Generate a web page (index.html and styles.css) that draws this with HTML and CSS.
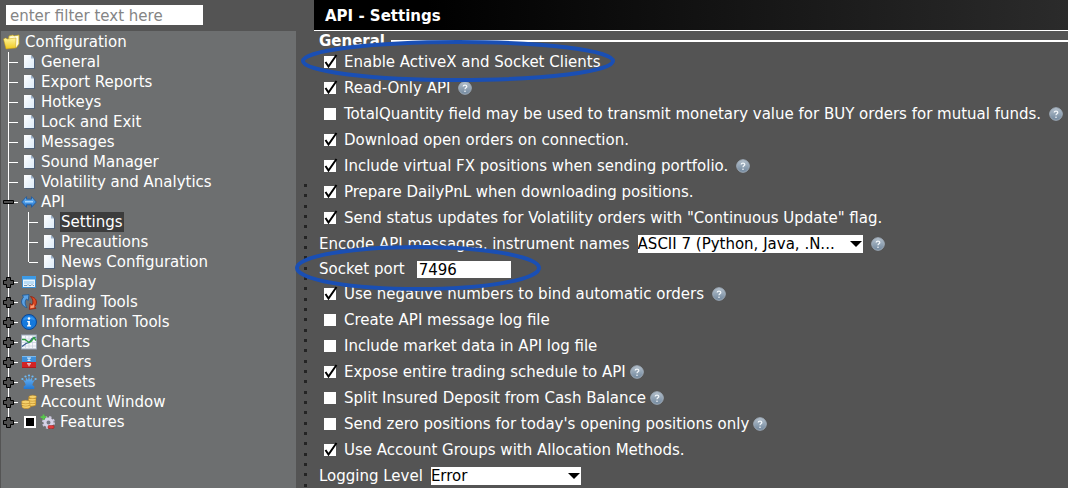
FILE: index.html
```
<!DOCTYPE html>
<html lang="en">

<head>
    <meta charset="utf-8">
    <meta name="viewport" content="width=device-width, initial-scale=1">
    <title>API - Settings</title>
    <link rel="stylesheet" href="styles.css">
</head>

<body>
    <!-- shared icons -->
    <svg class="sprite" aria-hidden="true">
        <defs>
            <linearGradient id="g-page" x1="0" y1="0" x2="1" y2="1">
                <stop offset="0" stop-color="#ffffff"/>
                <stop offset="1" stop-color="#dcebf8"/>
            </linearGradient>
            <linearGradient id="g-folder" x1="0" y1="0" x2="0" y2="1">
                <stop offset="0" stop-color="#fff59a"/>
                <stop offset="1" stop-color="#efc81e"/>
            </linearGradient>
            <linearGradient id="g-blue" x1="0" y1="0" x2="0" y2="1">
                <stop offset="0" stop-color="#6fb8f6"/>
                <stop offset="1" stop-color="#2277d2"/>
            </linearGradient>
            <linearGradient id="g-help" x1="0" y1="0" x2="0" y2="1">
                <stop offset="0" stop-color="#b4c0cc"/>
                <stop offset="1" stop-color="#71879d"/>
            </linearGradient>
        </defs>
        <symbol id="page" viewBox="0 0 11 14">
            <path d="M1 1h7l3 3v10H1z" fill="#50627a"/>
            <path d="M0 0h7l3 3.500V13H0z" fill="url(#g-page)"/>
            <path d="M7 0v3.500h3z" fill="#9db3cb"/>
        </symbol>
        <symbol id="folder" viewBox="0 0 17 16">
            <path d="M6 2l4-1 1 1 5-1v9l-3 4-8-3z" fill="#fff7b0" stroke="#c9a81c" stroke-width=".7"/>
            <path d="M7 3.500l8-1.500v8l-2 3z" fill="#fffbe0"/>
            <path d="M.5 5l2-1 2 1 8.500-1-.5 10-9.500 1z" fill="url(#g-folder)" stroke="#c79c10" stroke-width=".5"/>
        </symbol>
        <symbol id="arrows" viewBox="0 0 16 12">
            <path d="M.7 6L5.500.7v2.500h5V.7L15.300 6l-4.800 5.300V8.800h-5v2.500z" fill="url(#g-blue)" stroke="#1a559c" stroke-width=".8"/>
            <path d="M4 5h8v1.500H4z" fill="#a5d3fa"/>
        </symbol>
        <symbol id="display" viewBox="0 0 16 16">
            <rect x="1.500" y="2.500" width="13" height="11" fill="#eaf5fe" stroke="#3b8ed2"/>
            <path d="M1 2h14v3.500H1z" fill="#3c9ae6"/>
            <path d="M3 7h10v3H3z" fill="#b9dcf6"/>
            <path d="M3 11.500h3l1-1 1 1h2l1-1 1 1h1" fill="none" stroke="#6a8ca8" stroke-width=".9"/>
        </symbol>
        <symbol id="trading" viewBox="0 0 16 16">
            <path d="M6 13.500C2.500 13 .2 10 .6 7c.2-1.500.8-2.700 1.800-3.700L1.500 1.200 8 .6 7.300 6.500 5.500 5C3.500 7.500 3.700 10.500 6 13.500z" fill="#5ba2e4" stroke="#1c5490" stroke-width=".8"/>
            <path d="M9.500 2.500C13.500 3 16 5.800 15.400 9.300c-.2 1.300-.9 2.500-1.800 3.400l1.300 1.700-6.600 1 .8-6 1.700 1.700C12.600 8.600 12.300 5.500 9.500 2.500z" fill="#d94a24" stroke="#8e200d" stroke-width=".8"/>
            <path d="M9.700 10.800l1.200 1.200 2-2 .5 3-.9.7-3.200.6z" fill="#ff9c70"/>
        </symbol>
        <symbol id="info" viewBox="0 0 16 16">
            <circle cx="8" cy="8" r="7.500" fill="#1579dc" stroke="#0b4796"/>
            <path d="M2 6.500C3 1 13 1 14 6.500 10 4.800 6 4.800 2 6.500z" fill="#3494ee"/>
            <circle cx="8" cy="4.500" r="1.200" fill="#fff"/>
            <path d="M6.200 7h2.700v4.300h1.200v1.200H6v-1.200h1.200V8.200h-1z" fill="#fff"/>
        </symbol>
        <symbol id="charts" viewBox="0 0 16 16">
            <rect x=".5" y="1" width="15" height="14" fill="#f6f8fc" stroke="#9aa6b8"/>
            <path d="M1 5h14M1 8.500h14M1 12h14M4.500 2v12M8 2v12M11.500 2v12" stroke="#c5d0e0" stroke-width=".7"/>
            <path d="M1 12.500l4-3 3-1 3-4 4-1.500" fill="none" stroke="#35598f" stroke-width="1.200"/>
            <path d="M1 5.500h3l4 3 2-1 3-4 2 3" fill="none" stroke="#2f9e42" stroke-width="1.400"/>
        </symbol>
        <symbol id="orders" viewBox="0 0 16 16">
            <path d="M1 2h14v6H1z" fill="#3f8fd8"/>
            <path d="M1 8h14v6H1z" fill="#d32424"/>
            <path d="M1 2h14v1H1z" fill="#78b8ee"/>
            <path d="M1 13.500h14v.5H1z" fill="#8b1212"/>
            <path d="M6 4h4M8 4v2.500M6.500 6.500h3M6 9.800h4M8 9.800v2.500" fill="none" stroke="#e8f1fa" stroke-width="1"/>
        </symbol>
        <symbol id="presets" viewBox="0 0 16 16">
            <path d="M2 5.500l2.500 1.500L5 3.500l2 2.500 1-3.500L9 6l2-2.500.5 3.500L14 5.500 12 9l-.7 2 2 1.500V15H2.700v-2.500l2-1.500L4 9z" fill="url(#g-blue)"/>
            <g fill="#6dbbf8">
                <circle cx="1.400" cy="5" r="1.100"/>
                <circle cx="4.500" cy="2.500" r="1.100"/>
                <circle cx="8" cy="1.500" r="1.100"/>
                <circle cx="11.500" cy="2.500" r="1.100"/>
                <circle cx="14.600" cy="5" r="1.100"/>
            </g>
        </symbol>
        <symbol id="coins" viewBox="0 0 17 16">
            <path d="M8 2.500v9c1 2 7 1.500 8-.5V2z" fill="#d59b28"/>
            <path d="M1 8v5c1 2.500 8 2.500 9 .5V8.500z" fill="#d09428"/>
            <g fill="#f5d06a" stroke="#b07a1a" stroke-width=".5">
                <ellipse cx="11.500" cy="10.500" rx="4" ry="1.700"/>
                <ellipse cx="12" cy="8" rx="4" ry="1.700"/>
                <ellipse cx="12" cy="5.500" rx="4" ry="1.700"/>
                <ellipse cx="12.500" cy="2.500" rx="4" ry="1.800"/>
                <ellipse cx="5.500" cy="13" rx="4.500" ry="1.900"/>
                <ellipse cx="5" cy="10.500" rx="4.500" ry="1.900"/>
                <ellipse cx="5" cy="8" rx="4.500" ry="1.900"/>
            </g>
        </symbol>
        <symbol id="features" viewBox="0 0 16 16">
            <circle cx="8.500" cy="8.500" r="5.500" fill="none" stroke="#c9c5dc" stroke-width="2" stroke-dasharray="2.300 2.020"/>
            <circle cx="8.500" cy="8.500" r="3.500" fill="#777a86" stroke="#d5d2e6" stroke-width="3"/>
            <path d="M3.500.5v5.500M.7 3.200h5.600" stroke="#57c94b" stroke-width="1.800"/>
            <rect x="8" y="11.500" width="6" height="3" rx="1" fill="#e23b3b" stroke="#9c1b1b" stroke-width=".5"/>
        </symbol>
        <symbol id="help" viewBox="0 0 14 14">
            <circle cx="7" cy="7" r="6.300" fill="url(#g-help)" stroke="#9eabb8"/>
            <path d="M5.200 5.500C5.200 3.600 8.800 3.600 8.800 5.500 8.800 6.800 7 6.800 7 8.300" fill="none" stroke="#f2f6fa" stroke-width="1.300"/>
            <circle cx="7" cy="10.200" r=".8" fill="#f2f6fa"/>
        </symbol>
        <symbol id="plus" viewBox="0 0 11 11">
            <path d="M3.500.5h4v3h3v4h-3v3h-4v-3h-3v-4h3z" fill="#4c4c4c" stroke="#000"/>
        </symbol>
        <symbol id="minus" viewBox="0 0 11 11">
            <path d="M.5 3.500h10v3H.5z" fill="#4c4c4c" stroke="#000"/>
        </symbol>
    </svg>

    <div class="window">
        <aside class="sidebar">
            <div class="filter">
                <input type="text" placeholder="enter filter text here" aria-label="Filter">
            </div>
            <nav class="tree">
                <div class="root"><svg class="icon"><use href="#folder"/></svg><a href="#">Configuration</a></div>
                <ul class="branch">
                    <li><div class="node"><svg class="icon page"><use href="#page"/></svg><a href="#">General</a></div></li>
                    <li><div class="node"><svg class="icon page"><use href="#page"/></svg><a href="#">Export Reports</a></div></li>
                    <li><div class="node"><svg class="icon page"><use href="#page"/></svg><a href="#">Hotkeys</a></div></li>
                    <li><div class="node"><svg class="icon page"><use href="#page"/></svg><a href="#">Lock and Exit</a></div></li>
                    <li><div class="node"><svg class="icon page"><use href="#page"/></svg><a href="#">Messages</a></div></li>
                    <li><div class="node"><svg class="icon page"><use href="#page"/></svg><a href="#">Sound Manager</a></div></li>
                    <li><div class="node"><svg class="icon page"><use href="#page"/></svg><a href="#">Volatility and Analytics</a></div></li>
                    <li>
                        <div class="node">
                            <button class="toggle" aria-label="Collapse"><svg><use href="#minus"/></svg></button>
                            <svg class="icon arrows"><use href="#arrows"/></svg><a href="#">API</a>
                        </div>
                        <ul class="branch">
                            <li><div class="node"><svg class="icon page"><use href="#page"/></svg><a href="#" class="selected">Settings</a></div></li>
                            <li><div class="node"><svg class="icon page"><use href="#page"/></svg><a href="#">Precautions</a></div></li>
                            <li><div class="node"><svg class="icon page"><use href="#page"/></svg><a href="#">News Configuration</a></div></li>
                        </ul>
                    </li>
                    <li><div class="node"><button class="toggle" aria-label="Expand"><svg><use href="#plus"/></svg></button><svg class="icon"><use href="#display"/></svg><a href="#">Display</a></div></li>
                    <li><div class="node"><button class="toggle" aria-label="Expand"><svg><use href="#plus"/></svg></button><svg class="icon"><use href="#trading"/></svg><a href="#">Trading Tools</a></div></li>
                    <li><div class="node"><button class="toggle" aria-label="Expand"><svg><use href="#plus"/></svg></button><svg class="icon"><use href="#info"/></svg><a href="#">Information Tools</a></div></li>
                    <li><div class="node"><button class="toggle" aria-label="Expand"><svg><use href="#plus"/></svg></button><svg class="icon"><use href="#charts"/></svg><a href="#">Charts</a></div></li>
                    <li><div class="node"><button class="toggle" aria-label="Expand"><svg><use href="#plus"/></svg></button><svg class="icon"><use href="#orders"/></svg><a href="#">Orders</a></div></li>
                    <li><div class="node"><button class="toggle" aria-label="Expand"><svg><use href="#plus"/></svg></button><svg class="icon"><use href="#presets"/></svg><a href="#">Presets</a></div></li>
                    <li><div class="node"><button class="toggle" aria-label="Expand"><svg><use href="#plus"/></svg></button><svg class="icon"><use href="#coins"/></svg><a href="#">Account Window</a></div></li>
                    <li><div class="node"><button class="toggle" aria-label="Expand"><svg><use href="#plus"/></svg></button><input type="checkbox" class="partial" aria-label="Features"><svg class="icon"><use href="#features"/></svg><a href="#">Features</a></div></li>
                </ul>
            </nav>
        </aside>

        <div class="splitter"></div>

        <main class="content">
            <h1>API - Settings</h1>
            <h2>General</h2>
            <form class="settings">
                <div class="row circled">
                    <label><input type="checkbox" checked>Enable ActiveX and Socket Clients</label>
                    <svg class="mark mark-enable" viewBox="0 0 314 42"><ellipse cx="157" cy="21" rx="155" ry="19"/></svg>
                </div>
                <div class="row">
                    <label><input type="checkbox" checked>Read-Only API</label>
                    <svg class="help"><use href="#help"/></svg>
                </div>
                <div class="row">
                    <label><input type="checkbox">TotalQuantity field may be used to transmit monetary value for BUY orders for mutual funds.</label>
                    <svg class="help"><use href="#help"/></svg>
                </div>
                <div class="row">
                    <label><input type="checkbox" checked>Download open orders on connection.</label>
                </div>
                <div class="row">
                    <label><input type="checkbox" checked>Include virtual FX positions when sending portfolio.</label>
                    <svg class="help"><use href="#help"/></svg>
                </div>
                <div class="row">
                    <label><input type="checkbox" checked>Prepare DailyPnL when downloading positions.</label>
                </div>
                <div class="row">
                    <label><input type="checkbox" checked>Send status updates for Volatility orders with "Continuous Update" flag.</label>
                </div>
                <div class="row field">
                    <label for="encoding">Encode API messages, instrument names</label>
                    <select id="encoding" class="wide">
                        <option>ASCII 7 (Python, Java, .N...</option>
                    </select>
                    <svg class="help"><use href="#help"/></svg>
                </div>
                <div class="row field port circled">
                    <label for="port">Socket port</label>
                    <input type="text" id="port" value="7496">
                    <svg class="mark mark-port" viewBox="0 0 246 46"><ellipse cx="123" cy="23" rx="121" ry="21"/></svg>
                </div>
                <div class="row">
                    <label><input type="checkbox" checked>Use negative numbers to bind automatic orders</label>
                    <svg class="help"><use href="#help"/></svg>
                </div>
                <div class="row">
                    <label><input type="checkbox">Create API message log file</label>
                </div>
                <div class="row">
                    <label><input type="checkbox">Include market data in API log file</label>
                </div>
                <div class="row tight">
                    <label><input type="checkbox" checked>Expose entire trading schedule to API</label>
                    <svg class="help"><use href="#help"/></svg>
                </div>
                <div class="row tight">
                    <label><input type="checkbox">Split Insured Deposit from Cash Balance</label>
                    <svg class="help"><use href="#help"/></svg>
                </div>
                <div class="row tight">
                    <label><input type="checkbox">Send zero positions for today's opening positions only</label>
                    <svg class="help"><use href="#help"/></svg>
                </div>
                <div class="row">
                    <label><input type="checkbox" checked>Use Account Groups with Allocation Methods.</label>
                </div>
                <div class="row field">
                    <label for="logging">Logging Level</label>
                    <select id="logging">
                        <option>Error</option>
                    </select>
                </div>
            </form>
        </main>
    </div>
</body>

</html>
```
FILE: styles.css
```
:root {
    --bg-color: #545454;
    --tree-bg: #6d6f70;
    --text-color: #ffffff;
    --selected-bg: #3c3c3c;
    --mark-color: #1a4fb4;
}

* {
    box-sizing: border-box;
}

body {
    margin: 0;
    background-color: var(--bg-color);
    color: var(--text-color);
    font-family: Verdana, "DejaVu Sans", sans-serif;
    font-size: 15px;
    line-height: 20px;
}

input,
select {
    margin: 0;
    padding: 0;
    border: 0;
    border-radius: 0;
    font: inherit;
}

.sprite {
    position: absolute;
    width: 0;
    height: 0;
}

.window {
    display: flex;
    min-height: 100vh;
    overflow: hidden;
}

/* tree */

.sidebar {
    flex: 0 0 296px;
    display: flex;
    flex-direction: column;
}

.filter {
    padding: 5px 6px 6px;
}

.filter input {
    display: block;
    width: 197px;
    height: 20px;
    padding: 2px 4px 0;
    background-color: #fff;
}

.filter input::placeholder {
    color: #858585;
    opacity: 1;
}

.tree {
    flex: 1;
    margin-left: 1px;
    padding-top: 1px;
    background-color: var(--tree-bg);
}

.root,
.node {
    display: flex;
    align-items: center;
    height: 20px;
    white-space: nowrap;
}

.root {
    padding-left: 2px;
}

.branch {
    margin: 0;
    padding: 0 0 0 7px;
    list-style: none;
}

.branch .branch {
    padding-left: 19px;
}

.branch > li {
    border-left: 1px solid #fff;
}

.branch > li:last-child {
    border-image: linear-gradient(#fff 10px, transparent 10px) 1;
}

.node::before {
    content: "";
    width: 9px;
    height: 1px;
    margin-right: 3px;
    background-color: #fff;
}

.icon {
    width: 16px;
    height: 16px;
    margin-right: 4px;
    flex: none;
}

.root .icon {
    width: 17px;
    margin-right: 5px;
}

.icon.page {
    width: 11px;
    height: 14px;
    margin: 0 6px 0 3px;
}

.icon.arrows {
    height: 12px;
}

.tree a {
    color: inherit;
    text-decoration: none;
}

.tree a.selected {
    margin-left: -1px;
    padding: 0 1px;
    background-color: var(--selected-bg);
}

.toggle {
    display: flex;
    width: 11px;
    height: 11px;
    margin: 0 0 0 -6px;
    padding: 0;
    border: 0;
    background: none;
    order: -1;
}

.toggle svg {
    width: 11px;
    height: 11px;
}

/* the dash starts at the right edge of the toggle */
.node:has(.toggle)::before {
    width: 4px;
}

.partial {
    appearance: none;
    width: 12px;
    height: 12px;
    margin: 0 4px 0 3px;
    border: 2px solid #fff;
    background-color: #000;
}

/* drag handle between the tree and the page */

.splitter {
    flex: 0 0 18px;
    margin-top: 184px;
    background: linear-gradient(#242424 3px, transparent 3px 10px, #242424 10px 13px, transparent 13px 21px, #242424 21px 24px, transparent 24px) 8px 0 / 3px 31px repeat-y;
}

/* settings page */

.content {
    flex: 1;
    min-width: 0;
}

h1,
h2 {
    margin: 0;
    font-size: 15px;
    font-weight: bold;
}

h1 {
    height: 31px;
    padding: 6px 11px 0;
    border-bottom: 1px solid #fff;
    background: linear-gradient(90deg, #000 15%, #2b2b2b);
}

h2 {
    display: flex;
    align-items: center;
    gap: 6px;
    height: 18px;
    padding: 1px 0 0 5px;
}

h2::after {
    content: "";
    flex: 1;
    height: 2px;
    background-color: #fff;
}

.row {
    display: flex;
    align-items: center;
    gap: 8px;
    height: 26px;
    padding-left: 9px;
    white-space: nowrap;
}

.row.tight {
    gap: 4px;
}

.row.field {
    padding-left: 5px;
}

.row.port {
    gap: 12px;
    height: 24px;
}

.row.circled {
    position: relative;
}

.row label {
    display: flex;
    align-items: center;
}

.row input[type="checkbox"] {
    appearance: none;
    width: 15px;
    height: 16px;
    margin-right: 6px;
    background: url("data:image/svg+xml,%3Csvg xmlns='http://www.w3.org/2000/svg' width='15' height='16'%3E%3Cpath d='M1 2h12v12H1z' fill='%23fff'/%3E%3C/svg%3E") no-repeat;
}

.row input[type="checkbox"]:checked {
    background-image: url("data:image/svg+xml,%3Csvg xmlns='http://www.w3.org/2000/svg' width='15' height='16'%3E%3Cpath d='M1 2h12v12H1z' fill='%23fff'/%3E%3Cpath d='M2.500 8l3 4.500L13.500 1' fill='none' stroke='%23000' stroke-width='2'/%3E%3C/svg%3E");
}

.row select {
    appearance: none;
    width: 150px;
    height: 18px;
    line-height: 18px;
    color: #000;
    background: #fff url("data:image/svg+xml,%3Csvg xmlns='http://www.w3.org/2000/svg' width='12' height='6'%3E%3Cpath d='M0 0h12L6 6z'/%3E%3C/svg%3E") no-repeat right 1px center;
}

.row select.wide {
    width: 225px;
}

.row input[type="text"] {
    width: 94px;
    height: 17px;
    padding: 1px 2px 0;
    color: #000;
    background-color: #fff;
}

.help {
    width: 14px;
    height: 14px;
    flex: none;
}

/* hand-drawn rings over the two options that matter */

.mark {
    position: absolute;
    fill: none;
    stroke: var(--mark-color);
    stroke-width: 4;
    pointer-events: none;
}

.mark-enable {
    left: -13px;
    top: -9px;
    width: 314px;
    height: 42px;
}

.mark-port {
    left: -19px;
    top: -12px;
    width: 246px;
    height: 46px;
}
```
